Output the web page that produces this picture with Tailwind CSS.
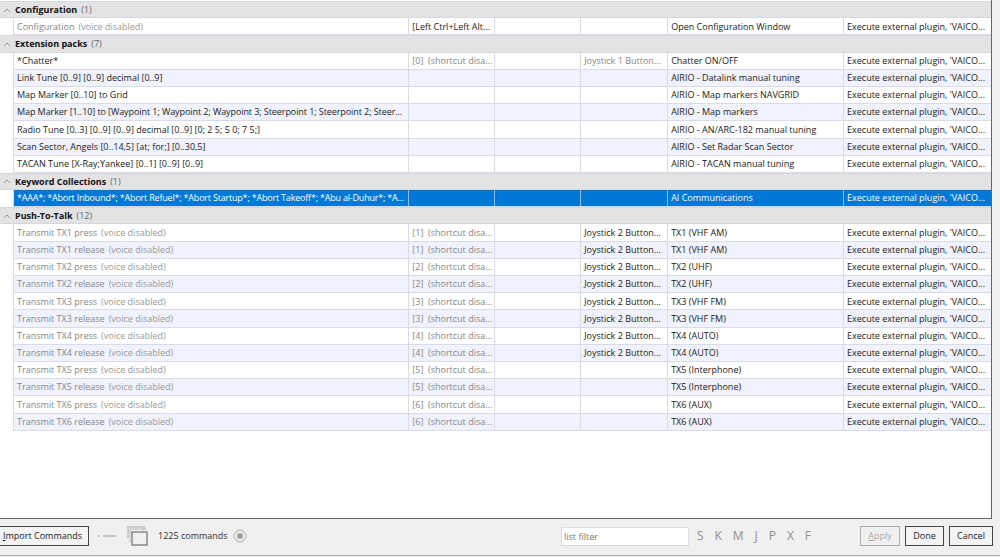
<!DOCTYPE html>
<html lang="en">
<head>
    <meta charset="UTF-8">
    <title>Commands</title>
    <script src="https://cdn.jsdelivr.net/npm/@tailwindcss/browser@4"></script>
</head>
<body class="w-[1000px] h-[557px] overflow-hidden bg-[#f0f0f0] font-['Open_Sans',sans-serif] text-[9px] text-[#222]">
    <div class="h-[519px] w-[991.5px] bg-white border-r border-b border-[#666] pt-[1px] box-border" id="list"></div>
    <div class="flex items-center h-[37px] border-b border-[#aaa] relative">
        <button class="w-[89px] h-[20px] -mt-[2px] bg-[#f4f4f4] border border-[#444] border-l-0 text-[#222] text-[9px] pl-[3px] text-left"><u>I</u>mport Commands</button>
        <svg class="ml-[8px] -mt-[2px]" width="20" height="6"><path d="M1 3h1M6 3h13" stroke="#999" stroke-width="1"/></svg>
        <svg class="ml-[9px] -mt-[2px]" width="24" height="22" fill="none"><path d="M2 13V2h16v3" stroke="#ccc" stroke-width="2"/><path d="M4 17V4h16" stroke="#bbb" stroke-width="1"/><rect x="6" y="7" width="15" height="13" stroke="#888" stroke-width="1.5" fill="#f0f0f0"/></svg>
        <span class="ml-[8px] w-[70px] -mt-[2px] text-[#333]">1225 commands</span>
        <svg class="ml-[5px] -mt-[2px]" width="14" height="14"><circle cx="7" cy="7" r="6" fill="#e6e6e6" stroke="#bbb"/><rect x="4.5" y="4.5" width="5" height="5" fill="#999"/></svg>
        <div class="ml-[314px] w-[128px] h-[19px] -mt-[2px] bg-white border border-[#ddd] pl-[2px] leading-[17px] text-[#777]">list filter</div>
        <div class="flex ml-[7px] w-[118px] justify-between text-[12px] text-[#8f8f8f] -mt-[2px] pl-[1px] pr-[3px]">
            <span>S</span><span>K</span><span>M</span><span>J</span><span>P</span><span>X</span><span>F</span>
        </div>
        <button class="ml-[46px] w-[40px] h-[20px] -mt-[2px] bg-[#f0f0f0] border border-[#aaa] text-[#aaa] text-[9px]"><u>A</u>pply</button>
        <button class="ml-[5px] w-[39px] h-[20px] -mt-[2px] bg-[#f4f4f4] border border-[#444] text-[#222] text-[9px]">Done</button>
        <button class="ml-[5px] w-[44px] h-[20px] -mt-[2px] bg-[#f4f4f4] border border-[#444] text-[#222] text-[9px]">Cancel</button>
    </div>
    <script>
        // group name, count, then rows: [name, note, shortcut, joystick, description, mode]
        // mode: d = name and shortcut greyed, s = shortcut and joystick greyed, k = selected, t = long name
        var plugin = "Execute external plugin, 'VAICO...";
        var sd = "(shortcut disa...";
        function ptt(n, key, joy, label) {
            var j = joy ? "Joystick 2 Button..." : "";
            return [
                ["Transmit TX" + n + " press", "(voice disabled)", "[" + key + "]  " + sd, j, label, "d"],
                ["Transmit TX" + n + " release", "(voice disabled)", "[" + key + "]  " + sd, j, label, "d"]
            ];
        }
        var groups = [
            ["Configuration", 1, [
                ["Configuration", "(voice disabled)", "[Left Ctrl+Left Alt...", "", "Open Configuration Window", "c"]
            ]],
            ["Extension packs", 7, [
                ["*Chatter*", "", "[0]  " + sd, "Joystick 1 Button...", "Chatter ON/OFF", "s"],
                ["Link Tune [0..9] [0..9] decimal [0..9]", "", "", "", "AIRIO - Datalink manual tuning", ""],
                ["Map Marker [0..10] to Grid", "", "", "", "AIRIO - Map markers NAVGRID", ""],
                ["Map Marker [1..10] to [Waypoint 1; Waypoint 2; Waypoint 3; Steerpoint 1; Steerpoint 2; Steer...", "", "", "", "AIRIO - Map markers", "t"],
                ["Radio Tune [0..3] [0..9] [0..9] decimal [0..9] [0; 2 5; 5 0; 7 5;]", "", "", "", "AIRIO - AN/ARC-182 manual tuning", ""],
                ["Scan Sector, Angels [0..14,5] [at; for;] [0..30,5]", "", "", "", "AIRIO - Set Radar Scan Sector", ""],
                ["TACAN Tune [X-Ray;Yankee] [0..1] [0..9] [0..9]", "", "", "", "AIRIO - TACAN manual tuning", ""]
            ]],
            ["Keyword Collections", 1, [
                ["*AAA*; *Abort Inbound*; *Abort Refuel*; *Abort Startup*; *Abort Takeoff*; *Abu al-Duhur*; *A...", "", "", "", "AI Communications", "k"]
            ]],
            ["Push-To-Talk", 12, [].concat(
                ptt(1, 1, true, "TX1 (VHF AM)"), ptt(2, 2, true, "TX2 (UHF)"),
                ptt(3, 3, true, "TX3 (VHF FM)"), ptt(4, 4, true, "TX4 (AUTO)"),
                ptt(5, 5, false, "TX5 (Interphone)"), ptt(6, 6, false, "TX6 (AUX)")
            )]
        ];

        var widths = ["w-[395.5px]", "w-[86px]", "w-[86px]", "w-[87px]", "w-[176px]", "w-[146.5px]"];
        var html = "";
        groups.forEach(function (g) {
            html += '<div class="flex items-center h-[17.2px] bg-[#e3e3e3] border-y border-[#d5d8e2]">'
                + '<svg class="ml-[3px]" width="8" height="6" fill="none"><path d="M1 5l3-3 3 3" stroke="#999" stroke-width="1"/></svg>'
                + '<span class="ml-[4px] font-bold text-[#111]">' + g[0] + '</span>'
                + '<span class="ml-[4px] text-[#666]">(' + g[1] + ')</span></div>';
            g[2].forEach(function (r, i) {
                var mode = r[5];
                var sel = mode === "k";
                var bg = sel ? "bg-[#0078d7] text-white" : (i % 2 ? "bg-[#f0f3fd]" : "bg-white");
                var nameCol = (mode === "d" || mode === "c") ? "text-[#888]" : "";
                if (sel) nameCol = "tracking-[-0.2px]";
                if (mode === "t") nameCol = "tracking-[-0.08px]";
                var keyCol = (mode === "d" || mode === "s") ? "text-[#888]" : "";
                var joyCol = mode === "s" ? "text-[#888]" : "";
                var cell = "h-full flex items-center pl-[3px] border-r whitespace-pre overflow-hidden "
                    + (sel ? "border-[#8dbde8] " : "border-[#d9dce8] ");
                html += '<div class="flex ml-[13px] h-[17.2px] border-b border-l border-[#d9dce8] box-border ' + bg + '">'
                    + '<div class="' + cell + widths[0] + ' ' + nameCol + '">' + r[0]
                    + (r[1] ? '<span class="ml-[4px] text-[#999]">' + r[1] + '</span>' : '') + '</div>'
                    + '<div class="' + cell + widths[1] + ' ' + keyCol + '">' + r[2] + '</div>'
                    + '<div class="' + cell + widths[2] + '"></div>'
                    + '<div class="' + cell + widths[3] + ' ' + joyCol + '">' + r[3] + '</div>'
                    + '<div class="' + cell + widths[4] + '">' + r[4] + '</div>'
                    + '<div class="h-full flex items-center pl-[3px] whitespace-pre overflow-hidden ' + widths[5] + '">' + plugin + '</div>'
                    + '</div>';
            });
        });
        document.getElementById("list").innerHTML = html;
    </script>
</body>
</html>
